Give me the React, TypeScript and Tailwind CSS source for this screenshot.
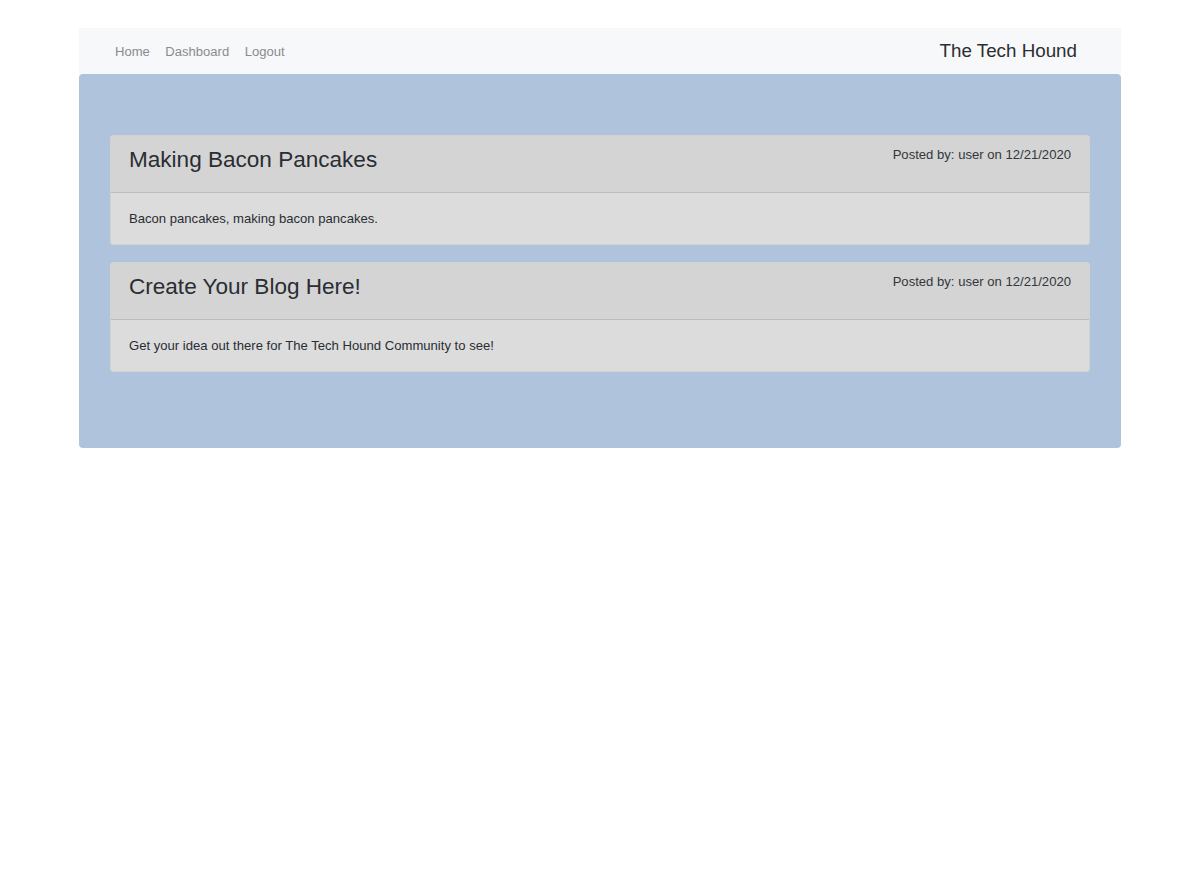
const font = "font-['Liberation_Sans',Arial,sans-serif]";

const posts = [
  { title: "Making Bacon Pancakes", body: "Bacon pancakes, making bacon pancakes." },
  { title: "Create Your Blog Here!", body: "Get your idea out there for The Tech Hound Community to see!" },
];

function Post({ title, body }: { title: string; body: string }) {
  return (
    <div className="rounded-[3px] border border-[#d2d2d2] bg-[#dcdcdc] overflow-hidden">
      <div className="h-[57px] flex justify-between border-b border-[#bdbbbb] bg-[#d4d4d4] pl-[18px] pr-[18px]">
        <h2 className="text-[22.55px] leading-[28px] pt-[10px] text-[#2a2d33]">{title}</h2>
        <span className="text-[13.1px] leading-[17px] pt-[9.6px] text-[#33363b]">Posted by: user on 12/21/2020</span>
      </div>
      <div className="h-[51px] pl-[18px] pt-[17px] text-[13.1px] leading-[17px] text-[#2a2d33]">{body}</div>
    </div>
  );
}

export default function App() {
  return (
    <div className={`${font} min-h-[870px] bg-white pt-[28px]`}>
      <div className="mx-auto w-[1042px]">
        <nav className="h-[46px] bg-[#f7f8fa] flex items-start justify-between pl-[36px] pr-[44px]">
          <div className="flex gap-[15.5px] pt-[15px] text-[13.05px] leading-[17px] text-[#898b8e]">
            <a>Home</a>
            <a>Dashboard</a>
            <a>Logout</a>
          </div>
          <a className="pt-[11px] text-[18.8px] leading-[23px] text-[#2c2e31]">The Tech Hound</a>
        </nav>
        <main className="h-[374px] rounded-[4px] bg-[#b0c3dd] px-[31px] pt-[61px] flex flex-col gap-[17px]">
          {posts.map((p) => (
            <Post key={p.title} {...p} />
          ))}
        </main>
      </div>
    </div>
  );
}
